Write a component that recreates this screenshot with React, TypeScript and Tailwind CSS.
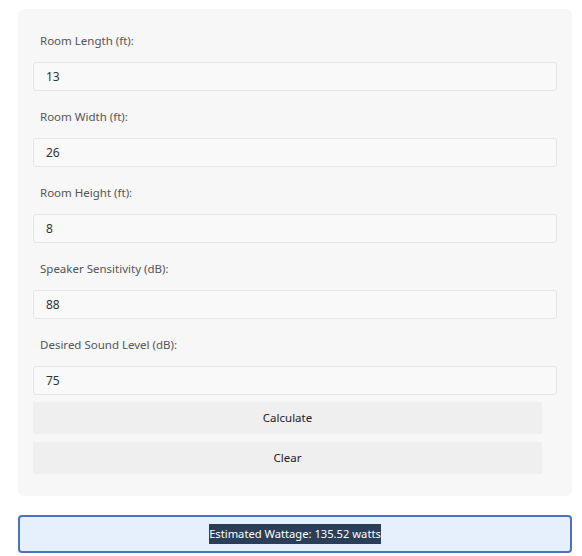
const fields = [
  { label: "Room Length (ft):", value: "13" },
  { label: "Room Width (ft):", value: "26" },
  { label: "Room Height (ft):", value: "8" },
  { label: "Speaker Sensitivity (dB):", value: "88" },
  { label: "Desired Sound Level (dB):", value: "75" },
];

export default function App() {
  return (
    <div className="min-h-screen bg-white pl-[18px] pr-[10px] pt-[9px] font-['Noto_Sans',sans-serif]">
      <div className="rounded-md bg-[#f7f7f7] px-[15px] pb-[22px] pt-[22px]">
        {fields.map((f, i) => (
          <div key={f.label} className={i === fields.length - 1 ? "mb-[7px]" : "mb-[16px]"}>
            <label className="mb-[11px] block h-5 pl-[7px] text-[11.5px] leading-5 text-[#555]">
              {f.label}
            </label>
            <input
              readOnly
              value={f.value}
              className="block h-[29px] w-full rounded-[3px] border border-[#e4e6ea] bg-[#f9f9f9] px-3 text-[12px] text-[#333] outline-none"
            />
          </div>
        ))}
        <button className="block h-[32px] w-[509px] bg-[#efefef] text-[11.5px] text-[#222]">
          Calculate
        </button>
        <button className="mt-2 block h-[32px] w-[509px] bg-[#efefef] text-[11.5px] text-[#222]">
          Clear
        </button>
      </div>
      <div className="mt-[19px] flex h-[38px] items-center justify-center rounded-[4px] border-2 border-[#4a72c0] bg-[#e6f0fd]">
        <span className="bg-[#2b3e57] text-[11.2px] leading-5 text-white">
          Estimated Wattage: 135.52 watts
        </span>
      </div>
    </div>
  );
}
